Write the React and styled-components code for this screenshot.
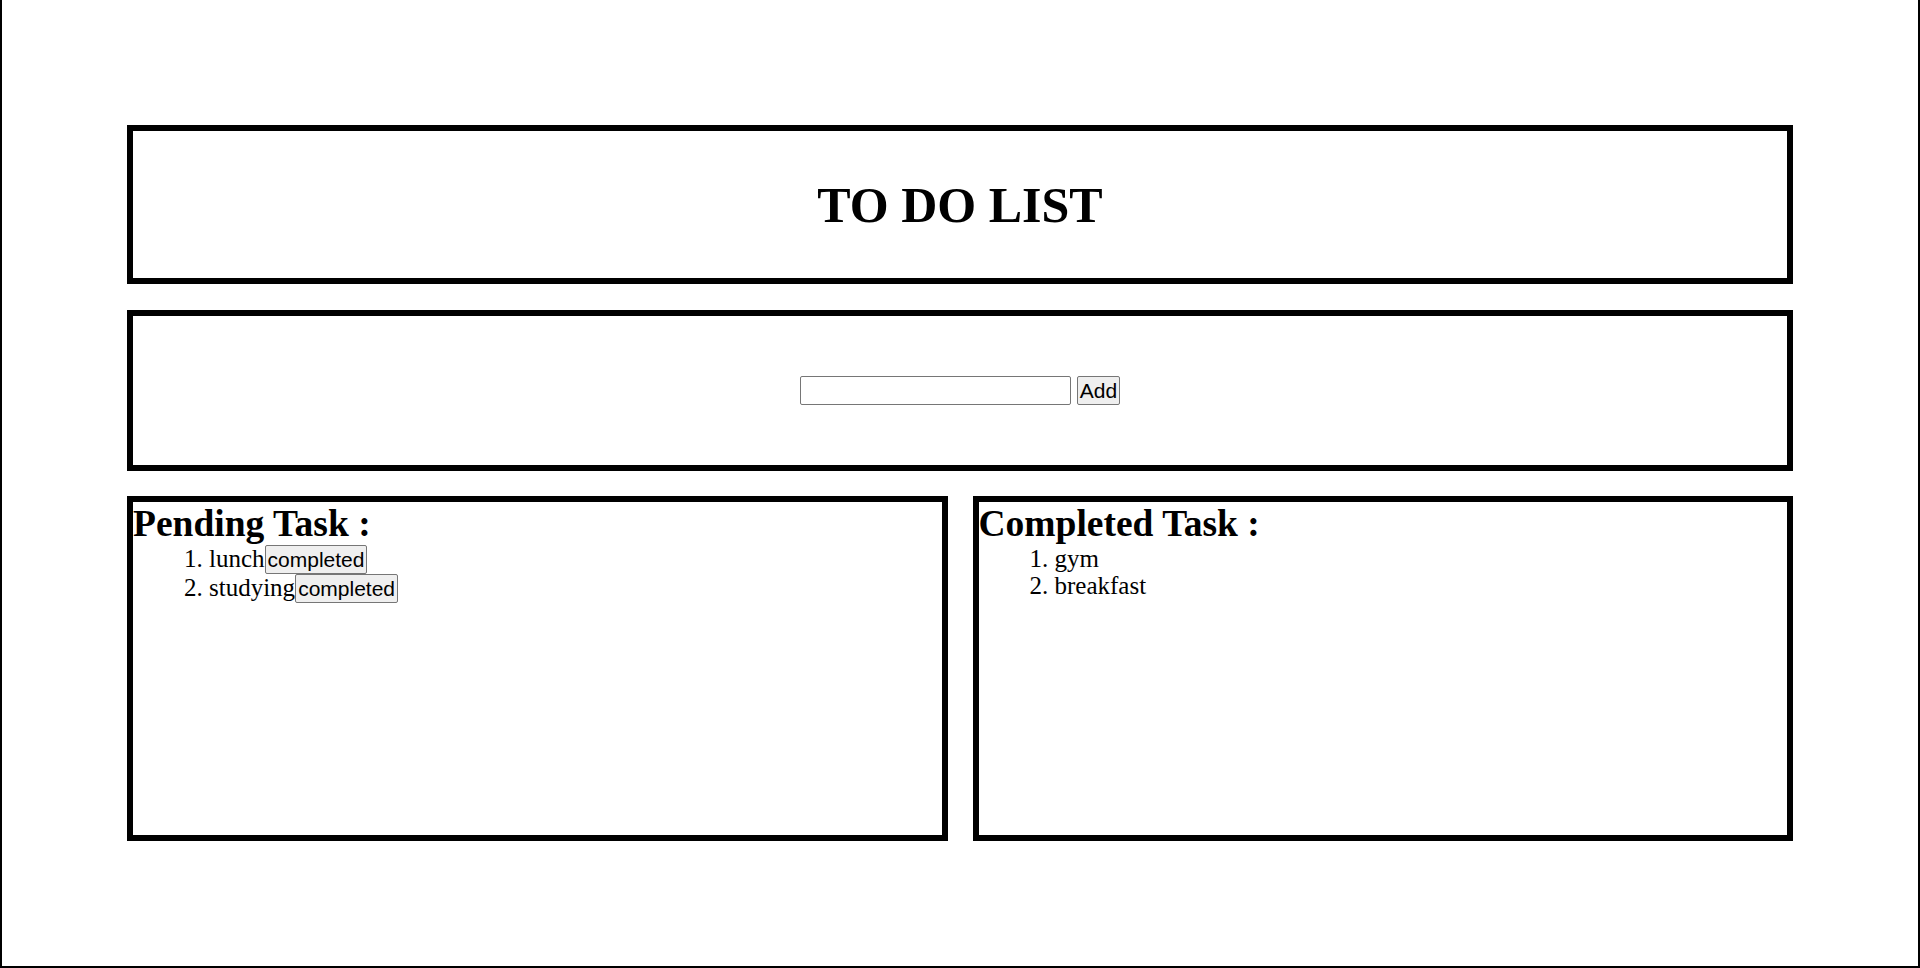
import React from 'react';
import styled, { createGlobalStyle } from 'styled-components';

const GlobalStyle = createGlobalStyle`
  html, body {
    margin: 0;
    padding: 0;
    background: #fff;
    font-family: "Liberation Serif", "Times New Roman", serif;
    color: #000;
  }
`;

const Page = styled.div`
  box-sizing: border-box;
  height: 968px;
  border: 2px solid #000;
  border-top: none;
  padding: 125px 125px 0;
`;

const Box = styled.div`
  box-sizing: border-box;
  border: 6px solid #000;
  height: ${p => p.h}px;
  margin-bottom: ${p => p.mb || 0}px;
`;

const Header = styled(Box)`
  display: flex;
  align-items: center;
  justify-content: center;
`;

const Title = styled.h1`
  margin: 0;
  font-size: 50px;
  font-weight: bold;
`;

const Form = styled(Box)`
  display: flex;
  align-items: center;
  justify-content: center;
  gap: 6px;
`;

const TextInput = styled.input`
  box-sizing: border-box;
  width: 271px;
  height: 29px;
  border: 1px solid #767676;
  border-radius: 2px;
  padding: 1px 2px;
  font-family: "Liberation Sans", Arial, sans-serif;
  font-size: 20px;
  outline: none;
`;

const Button = styled.button`
  box-sizing: border-box;
  height: 29px;
  padding: 1px 2px;
  border: 1px solid #767676;
  border-radius: 2px;
  background: #efefef;
  color: #000;
  font-family: "Liberation Sans", Arial, sans-serif;
  font-size: 21px;
  line-height: 25px;
  cursor: pointer;
`;

const Lists = styled.div`
  display: grid;
  grid-template-columns: 1fr 1fr;
  gap: 25px;
`;

const Heading = styled.h2`
  margin: 0;
  font-size: 37.5px;
  font-weight: bold;
`;

const List = styled.ol`
  margin: 0;
  padding-left: 76px;
  font-size: 25px;
  line-height: 27px;
`;

class App extends React.Component {
  constructor(props){
    super(props)
    this.state = {
      text: '',
      pending: ['lunch', 'studying'],
      done: ['gym', 'breakfast'],
    }

    this.handleAdd = this.handleAdd.bind(this);
  }

  handleAdd(){
    if(this.state.text.trim() === '') return;
    this.setState({ pending: [...this.state.pending, this.state.text], text: '' })
  }

  handleComplete(i){
    const item = this.state.pending[i];
    this.setState({
      pending: this.state.pending.filter((_, k) => k !== i),
      done: [...this.state.done, item],
    })
  }

  render(){
    return(
      <Page>
        <GlobalStyle />
        <Header h={159} mb={26}>
          <Title>TO DO LIST</Title>
        </Header>
        <Form h={161} mb={25}>
          <TextInput
            value={ this.state.text }
            onChange={ e => this.setState({ text: e.target.value }) }
            />
          <Button onClick={ this.handleAdd }>Add</Button>
        </Form>
        <Lists>
          <Box h={345}>
            <Heading>Pending Task :</Heading>
            <List>
              {this.state.pending.map((t, i) =>
                <li key={i}>{t}<Button onClick={ () => this.handleComplete(i) }>completed</Button></li>
              )}
            </List>
          </Box>
          <Box h={345}>
            <Heading>Completed Task :</Heading>
            <List>
              {this.state.done.map((t, i) => <li key={i}>{t}</li>)}
            </List>
          </Box>
        </Lists>
      </Page>
    )
  }
}

export default App;
